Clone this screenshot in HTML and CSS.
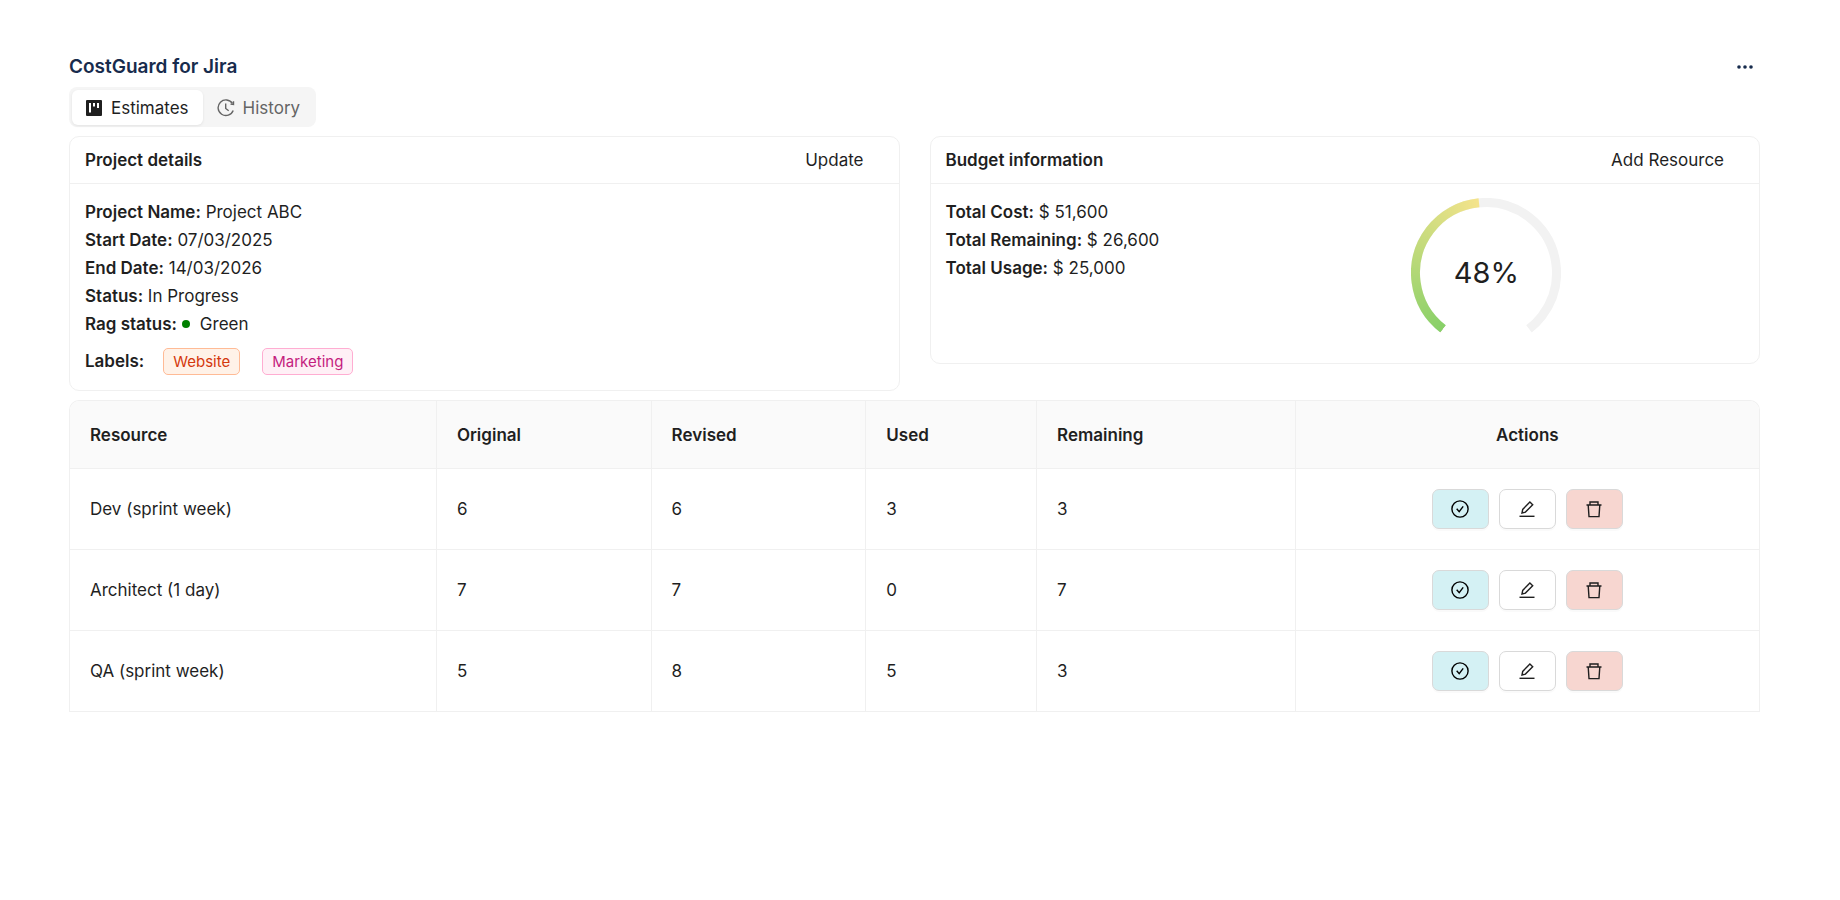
FILE: index.html
```html
<!DOCTYPE html>
<html lang="en">
<head>
  <meta charset="UTF-8">
  <meta name="viewport" content="width=device-width, initial-scale=1.0">
  <title>CostGuard for Jira</title>
  <link rel="stylesheet" href="styles.css">
</head>
<body>
  <!-- Icons shared by the table rows -->
  <svg class="sprite" aria-hidden="true">
    <symbol id="icon-check" viewBox="0 0 18 18">
      <circle cx="9" cy="9" r="8.100" />
      <path d="M5.700 8.700l2.500 2.900 4-5.300" />
    </symbol>
    <symbol id="icon-edit" viewBox="0 0 18 18">
      <path d="M1.500 16.300h15" />
      <path d="M4 13l.7-3.600L11.900 2l2.800 2.700-7.300 7.400z" />
    </symbol>
    <symbol id="icon-delete" viewBox="0 0 18 18">
      <path d="M1.500 5h15M5 5V2h8v3M3.200 5l.8 11.600h10L14.800 5" />
    </symbol>
  </svg>

  <div class="container">
    <header class="page-header">
      <h1>CostGuard for Jira</h1>
      <button class="more" type="button" aria-label="More">
        <svg width="16" height="4" viewBox="0 0 16 4"><circle cx="2" cy="2" r="1.800" /><circle cx="8" cy="2" r="1.800" /><circle cx="14" cy="2" r="1.800" /></svg>
      </button>
    </header>

    <nav class="tabs">
      <button class="tab active" type="button">
        <svg width="16" height="16" viewBox="0 0 16 16">
          <rect width="16" height="16" rx="1" fill="#1f1f1f" />
          <path d="M3 3h2v9.500h-2zM7 3h2v3.500h-2zM11 3h2v5h-2z" fill="#fff" />
        </svg>
        Estimates
      </button>
      <button class="tab" type="button">
        <svg class="line-icon" width="18" height="18" viewBox="0 0 18 18">
          <path d="M16.200 11.500A7.800 7.800 0 1 1 15.500 4.500" />
          <path d="M8.700 4.500v5l3 2.300M16.500 2.200v3.300l-3-.4" />
        </svg>
        History
      </button>
    </nav>

    <div class="cards">
      <section class="card">
        <div class="card-head">
          <h2>Project details</h2>
          <button class="text-button" type="button">Update</button>
        </div>
        <div class="card-body">
          <p><strong>Project Name:</strong> Project ABC</p>
          <p><strong>Start Date:</strong> 07/03/2025</p>
          <p><strong>End Date:</strong> 14/03/2026</p>
          <p><strong>Status:</strong> In Progress</p>
          <p><strong>Rag status:</strong> <span class="dot"></span>Green</p>
          <div class="labels">
            <strong>Labels:</strong>
            <span class="tag volcano">Website</span>
            <span class="tag magenta">Marketing</span>
          </div>
        </div>
      </section>

      <section class="card">
        <div class="card-head">
          <h2>Budget information</h2>
          <button class="text-button" type="button">Add Resource</button>
        </div>
        <div class="card-body budget">
          <div>
            <p><strong>Total Cost:</strong> $ 51,600</p>
            <p><strong>Total Remaining:</strong> $ 26,600</p>
            <p><strong>Total Usage:</strong> $ 25,000</p>
          </div>
          <div class="gauge">
            <svg width="150" height="150" viewBox="0 0 150 150">
              <mask id="used">
                <circle class="arc" cx="75" cy="75" r="70.5" pathLength="360" stroke="#fff" stroke-dasharray="136.8 360" transform="rotate(127.5 75 75)" />
              </mask>
              <circle class="arc" cx="75" cy="75" r="70.5" pathLength="360" stroke="#f2f2f2" stroke-dasharray="285 360" transform="rotate(127.5 75 75)" />
              <foreignObject width="150" height="150" mask="url(#used)">
                <div class="gauge-fill"></div>
              </foreignObject>
            </svg>
            <span class="gauge-text">48%</span>
          </div>
        </div>
      </section>
    </div>

    <table class="resources">
      <colgroup>
        <col class="col-resource">
        <col class="col-original">
        <col class="col-revised">
        <col class="col-used">
        <col class="col-remaining">
        <col class="col-actions">
      </colgroup>
      <thead>
        <tr>
          <th>Resource</th>
          <th>Original</th>
          <th>Revised</th>
          <th>Used</th>
          <th>Remaining</th>
          <th class="center">Actions</th>
        </tr>
      </thead>
      <tbody>
        <tr>
          <td>Dev (sprint week)</td>
          <td>6</td>
          <td>6</td>
          <td>3</td>
          <td>3</td>
          <td>
            <div class="actions">
              <button class="action done" type="button" aria-label="Complete"><svg><use href="#icon-check" /></svg></button>
              <button class="action" type="button" aria-label="Edit"><svg><use href="#icon-edit" /></svg></button>
              <button class="action delete" type="button" aria-label="Delete"><svg><use href="#icon-delete" /></svg></button>
            </div>
          </td>
        </tr>
        <tr>
          <td>Architect (1 day)</td>
          <td>7</td>
          <td>7</td>
          <td>0</td>
          <td>7</td>
          <td>
            <div class="actions">
              <button class="action done" type="button" aria-label="Complete"><svg><use href="#icon-check" /></svg></button>
              <button class="action" type="button" aria-label="Edit"><svg><use href="#icon-edit" /></svg></button>
              <button class="action delete" type="button" aria-label="Delete"><svg><use href="#icon-delete" /></svg></button>
            </div>
          </td>
        </tr>
        <tr>
          <td>QA (sprint week)</td>
          <td>5</td>
          <td>8</td>
          <td>5</td>
          <td>3</td>
          <td>
            <div class="actions">
              <button class="action done" type="button" aria-label="Complete"><svg><use href="#icon-check" /></svg></button>
              <button class="action" type="button" aria-label="Edit"><svg><use href="#icon-edit" /></svg></button>
              <button class="action delete" type="button" aria-label="Delete"><svg><use href="#icon-delete" /></svg></button>
            </div>
          </td>
        </tr>
      </tbody>
    </table>
  </div>
</body>
</html>
```
FILE: styles.css
```css
* {
  box-sizing: border-box;
}

body {
  margin: 0;
  font-family: Inter, sans-serif;
  font-size: 17px;
  line-height: 28px;
  color: #1f1f1f;
  background-color: #fff;
}

h1, h2, p {
  margin: 0;
}

strong {
  font-weight: 600;
}

button {
  font: inherit;
  color: inherit;
  border: none;
  background: none;
  padding: 0;
  cursor: pointer;
}

.sprite {
  display: none;
}

.container {
  padding: 53px 80px 40px 69px;
}

.page-header {
  display: flex;
  justify-content: space-between;
  align-items: center;
  height: 28px;
  padding-right: 7px;
}

.page-header h1 {
  font-size: 19px;
  font-weight: 600;
  color: #172b4d;
}

.more {
  display: flex;
  align-items: center;
  height: 28px;
  fill: #172b4d;
}

/* Tabs */
.tabs {
  display: inline-flex;
  margin-top: 6px;
  padding: 3px 3px 2px;
  border-radius: 8px;
  background-color: #f5f5f5;
  vertical-align: top;
}

.tab {
  display: flex;
  align-items: center;
  gap: 9px;
  height: 35px;
  padding: 0 14px;
  border-radius: 6px;
  color: #656565;
}

.tab + .tab {
  gap: 8px;
  padding-right: 13px;
}

.tab.active {
  color: #1f1f1f;
  background-color: #fff;
  box-shadow: 0 1px 3px rgba(0, 0, 0, 0.08);
}

.line-icon {
  fill: none;
  stroke: #656565;
  stroke-width: 1.4;
}

/* Cards */
.cards {
  display: grid;
  grid-template-columns: 1fr 1fr;
  gap: 30px;
  align-items: start;
  margin-top: 9px;
}

.card {
  border: 1px solid #f0f0f0;
  border-radius: 10px;
}

.card-head {
  display: flex;
  justify-content: space-between;
  align-items: center;
  height: 47px;
  padding: 0 15px;
  border-bottom: 1px solid #f0f0f0;
}

.card-head h2 {
  font-size: 17px;
  font-weight: 600;
}

.text-button {
  padding: 0 20px;
}

.card-body {
  padding: 14px 15px 15px;
}

.dot {
  display: inline-block;
  width: 8px;
  height: 8px;
  margin-right: 10px;
  border-radius: 50%;
  background-color: #008000;
  vertical-align: 2px;
}

.labels {
  display: flex;
  align-items: center;
  margin-top: 9px;
}

.tag {
  height: 27px;
  margin-left: 19px;
  padding: 0 9px;
  border: 1px solid;
  border-radius: 5px;
  font-size: 15px;
  line-height: 25px;
}

.tag + .tag {
  margin-left: 22px;
}

.volcano {
  color: #d4380d;
  background-color: #fff2e8;
  border-color: #ffbb96;
}

.magenta {
  color: #c41d7f;
  background-color: #fff0f6;
  border-color: #ffadd2;
}

.budget {
  display: grid;
  grid-template-columns: 14fr 10fr;
}

.gauge {
  display: grid;
  place-items: center;
  width: 150px;
  height: 150px;
}

.gauge svg,
.gauge-text {
  grid-area: 1 / 1;
}

.arc {
  fill: none;
  stroke-width: 9;
}

.gauge-fill {
  width: 150px;
  height: 150px;
  background: conic-gradient(from 217.5deg, #87d068, #ffe58f 150deg, #ffccc7 285deg);
}

.gauge-text {
  font-size: 29px;
}

/* Resource table */
.resources {
  width: 100%;
  margin-top: 9px;
  border: 1px solid #f0f0f0;
  border-bottom: none;
  border-radius: 10px 10px 0 0;
  border-spacing: 0;
  table-layout: fixed;
  overflow: hidden;
}

.resources th,
.resources td {
  padding: 20px;
  border-right: 1px solid #f0f0f0;
  border-bottom: 1px solid #f0f0f0;
  text-align: left;
  font-weight: 400;
}

.resources th {
  padding-bottom: 19px;
  font-weight: 600;
  background-color: #fafafa;
}

.resources th:last-child,
.resources td:last-child {
  border-right: none;
}

.resources .center {
  text-align: center;
}

.col-resource { width: 21.7%; }
.col-original { width: 12.7%; }
.col-revised { width: 12.7%; }
.col-used { width: 10.1%; }
.col-remaining { width: 15.3%; }
.col-actions { width: 27.4%; }

.actions {
  display: flex;
  justify-content: center;
  gap: 10px;
}

.action {
  display: flex;
  align-items: center;
  justify-content: center;
  width: 57px;
  height: 40px;
  border: 1px solid #d9d9d9;
  border-radius: 7px;
  background-color: #fff;
  box-shadow: 0 2px 0 rgba(0, 0, 0, 0.02);
}

.action svg {
  width: 18px;
  height: 18px;
  fill: none;
  stroke: #1f1f1f;
  stroke-width: 1.4;
}

.done {
  background-color: #d4f1f4;
}

.done svg {
  stroke: #000;
}

.delete {
  background-color: #f7d6d0;
}
```
